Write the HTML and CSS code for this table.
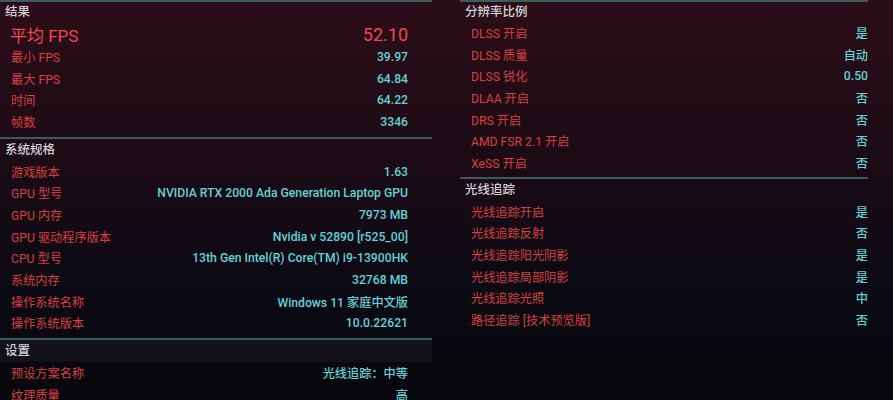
FILE: index.html
```html
<!DOCTYPE html>
<html lang="zh-CN">
<head>
  <meta charset="UTF-8" />
  <title>基准测试结果</title>
  <link rel="stylesheet" href="styles.css">
</head>
<body>
  <div class="screen">
    <div class="column left">
      <!-- 结果 -->
      <section class="group">
        <h2>结果</h2>
        <div class="row big"><span class="label">平均 FPS</span><span class="value">52.10</span></div>
        <div class="row"><span class="label">最小 FPS</span><span class="value">39.97</span></div>
        <div class="row"><span class="label">最大 FPS</span><span class="value">64.84</span></div>
        <div class="row"><span class="label">时间</span><span class="value">64.22</span></div>
        <div class="row"><span class="label">帧数</span><span class="value">3346</span></div>
      </section>

      <!-- 系统规格 -->
      <section class="group">
        <h2>系统规格</h2>
        <div class="row"><span class="label">游戏版本</span><span class="value">1.63</span></div>
        <div class="row"><span class="label">GPU 型号</span><span class="value">NVIDIA RTX 2000 Ada Generation Laptop GPU</span></div>
        <div class="row"><span class="label">GPU 内存</span><span class="value">7973 MB</span></div>
        <div class="row"><span class="label">GPU 驱动程序版本</span><span class="value">Nvidia v 52890 [r525_00]</span></div>
        <div class="row"><span class="label">CPU 型号</span><span class="value">13th Gen Intel(R) Core(TM) i9-13900HK</span></div>
        <div class="row"><span class="label">系统内存</span><span class="value">32768 MB</span></div>
        <div class="row"><span class="label">操作系统名称</span><span class="value">Windows 11 家庭中文版</span></div>
        <div class="row"><span class="label">操作系统版本</span><span class="value">10.0.22621</span></div>
      </section>

      <!-- 设置 -->
      <section class="group">
        <h2 class="band">设置</h2>
        <div class="row"><span class="label">预设方案名称</span><span class="value">光线追踪：中等</span></div>
        <div class="row"><span class="label">纹理质量</span><span class="value">高</span></div>
      </section>
    </div>

    <div class="column right">
      <!-- 分辨率比例 -->
      <section class="group">
        <h2>分辨率比例</h2>
        <div class="row"><span class="label">DLSS 开启</span><span class="value">是</span></div>
        <div class="row"><span class="label">DLSS 质量</span><span class="value">自动</span></div>
        <div class="row"><span class="label">DLSS 锐化</span><span class="value">0.50</span></div>
        <div class="row"><span class="label">DLAA 开启</span><span class="value">否</span></div>
        <div class="row"><span class="label">DRS 开启</span><span class="value">否</span></div>
        <div class="row"><span class="label">AMD FSR 2.1 开启</span><span class="value">否</span></div>
        <div class="row"><span class="label">XeSS 开启</span><span class="value">否</span></div>
      </section>

      <!-- 光线追踪 -->
      <section class="group">
        <h2>光线追踪</h2>
        <div class="row"><span class="label">光线追踪开启</span><span class="value">是</span></div>
        <div class="row"><span class="label">光线追踪反射</span><span class="value">否</span></div>
        <div class="row"><span class="label">光线追踪阳光阴影</span><span class="value">是</span></div>
        <div class="row"><span class="label">光线追踪局部阴影</span><span class="value">是</span></div>
        <div class="row"><span class="label">光线追踪光照</span><span class="value">中</span></div>
        <div class="row"><span class="label">路径追踪 [技术预览版]</span><span class="value">否</span></div>
      </section>
    </div>
  </div>
</body>
</html>
```

FILE: styles.css
```css
html, body {
  height: 100%;
}

body {
  margin: 0;
  overflow: hidden;
  font-family: Roboto, "Noto Sans CJK SC", sans-serif;
  background: linear-gradient(180deg, #2b0e18 0%, #1e0b15 35%, #0c0a14 70%, #07070d 100%);
  color: #d8d8d8;
}

.screen {
  display: grid;
  grid-template-columns: 432px 1fr;
  column-gap: 28px;
}

.right {
  padding-right: 25px;
}

.group {
  border-top: 2px solid #3d5a60;
  padding-bottom: 4px;
}

.right .group {
  padding-bottom: 3px;
}

.group h2 {
  margin: 0;
  height: 22px;
  line-height: 22px;
  padding-left: 5px;
  font-size: 12.5px;
  font-weight: 500;
  color: #d2d2d6;
}

.group:first-child h2 {
  height: 20px;
  line-height: 20px;
}

.group h2.band {
  background: rgba(255, 255, 255, 0.04);
}

.left .group {
  padding-right: 24px;
}

.left .group h2 {
  margin-right: -24px;
}

.row {
  display: flex;
  justify-content: space-between;
  align-items: center;
  height: 21.7px;
  padding-left: 11px;
  font-size: 12.2px;
}

.label {
  color: #d9403f;
}

.value {
  color: #62d2d6;
  font-weight: 500;
}

.row.big {
  height: 24px;
  padding-left: 10px;
  font-size: 17px;
}

.row.big .label {
  color: #f0474d;
}

.row.big .value {
  color: #f0474d;
  font-size: 18px;
  font-weight: 400;
}
```
